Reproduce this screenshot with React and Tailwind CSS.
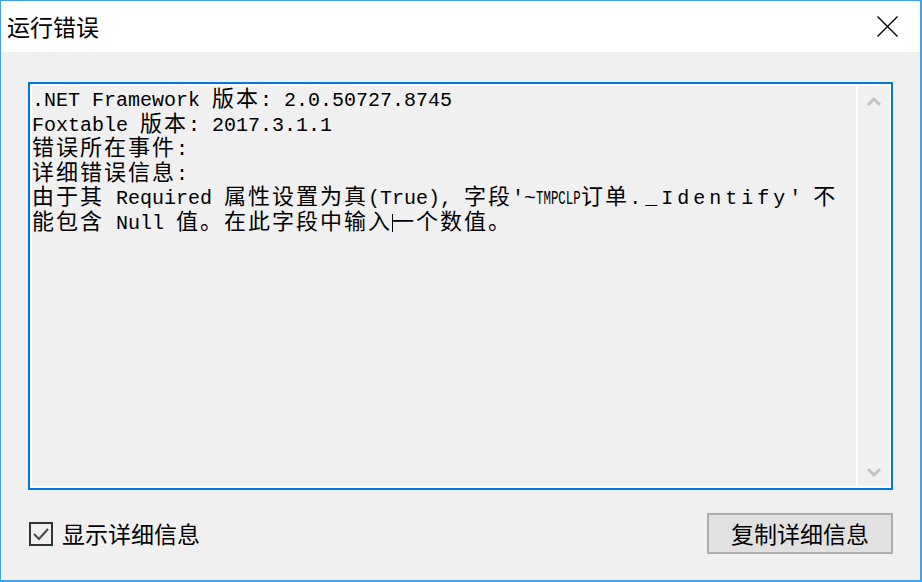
import React from "react";

const CJK_RE = /[\u3000-\u303f\u4e00-\u9fff\uff00-\uffef]+|[^\u3000-\u303f\u4e00-\u9fff\uff00-\uffef]+/g;
const IS_CJK = /[\u3000-\u303f\u4e00-\u9fff\uff00-\uffef]/;

const Runs = ({ text, extra = "" }) =>
  text.match(CJK_RE).map((part, i) =>
    IS_CJK.test(part) ? (
      <span key={i} className="text-[22px] tracking-[2px] leading-[16px]">
        {part}
      </span>
    ) : (
      <span key={i} className={extra}>
        {part}
      </span>
    )
  );

const Line = ({ children }) => (
  <div className="h-[24.6px] leading-[24.6px] whitespace-pre">{children}</div>
);

const Chevron = ({ up }) => (
  <svg width="16" height="10" viewBox="0 0 16 10">
    <polyline
      points={up ? "2,8 8,2 14,8" : "2,2 8,8 14,2"}
      fill="none"
      stroke="#c2c2c2"
      strokeWidth="3"
    />
  </svg>
);

export default function App() {
  const ui = "font-['Noto_Sans_CJK_SC','Noto_Sans',sans-serif]";

  return (
    <div className="w-[922px] h-[582px] bg-[#f0f0f0] border-t border-l border-r-2 border-b-2 border-[#41a1ea] flex flex-col">
      {/* title bar */}
      <div className="h-[51px] bg-white flex items-center justify-between pl-[6px] pr-[22px]">
        <span className={`${ui} text-[23px] text-black leading-none`}>运行错误</span>
        <svg width="21" height="21" viewBox="0 0 21 21">
          <path d="M0.5 0.5 L20.5 20.5 M20.5 0.5 L0.5 20.5" stroke="#000" strokeWidth="1.4" />
        </svg>
      </div>

      <div className="flex-1 flex flex-col px-[27px] pt-[30px]">
        {/* read-only text box */}
        <div className="h-[408px] border-2 border-[#0078d7] flex">
          <div className="flex-1 flex border-t-2 border-l-2 border-b-2 border-r border-white">
            <div className="flex-1 pt-[3px] text-[20px] text-black font-['Liberation_Mono','Noto_Sans_CJK_SC',monospace]">
              <Line>
                <Runs text=".NET Framework 版本: 2.0.50727.8745" />
              </Line>
              <Line>
                <Runs text="Foxtable 版本: 2017.3.1.1" />
              </Line>
              <Line>
                <Runs text="错误所在事件:" />
              </Line>
              <Line>
                <Runs text="详细错误信息:" />
              </Line>
              <Line>
                <Runs text="由于其 Required 属性设置为真(True), 字段'~" />
                <span className="inline-block w-[45px]">
                  <span className="inline-block origin-left scale-x-[0.62] scale-y-100">TMPCLP</span>
                </span>
                <span className="text-[22px] tracking-[2px] leading-[16px]">订单</span>
                <span className="tracking-[4px]">._Identify</span>
                <Runs text="' 不" />
              </Line>
              <Line>
                <Runs text="能包含 Null 值。在此字段中输入" />
                <span className="inline-block w-px h-[18px] bg-black align-[-3px] -mr-px"></span>
                <Runs text="一个数值。" />
              </Line>
            </div>
            {/* scrollbar */}
            <div className="w-[34px] border-l-2 border-white flex flex-col items-center justify-between pt-[11px] pb-[9px]">
              <Chevron up />
              <Chevron />
            </div>
          </div>
        </div>

        {/* bottom row */}
        <div className="mt-[23px] flex items-center justify-between">
          <label className="flex items-center gap-[9px] pl-px">
            <span className="w-[24px] h-[24px] border-2 border-[#333333] flex items-center justify-center">
              <svg width="18" height="14" viewBox="0 0 18 14">
                <polyline points="2,7 7,12 16,2" fill="none" stroke="#4d4d4d" strokeWidth="2.2" />
              </svg>
            </span>
            <span className={`${ui} text-[23px] text-black leading-none`}>显示详细信息</span>
          </label>
          <button className={`${ui} w-[186px] h-[41px] bg-[#e1e1e1] border-2 border-[#adadad] text-[23px] text-black leading-none flex items-center justify-center`}>
            复制详细信息
          </button>
        </div>
      </div>
    </div>
  );
}
